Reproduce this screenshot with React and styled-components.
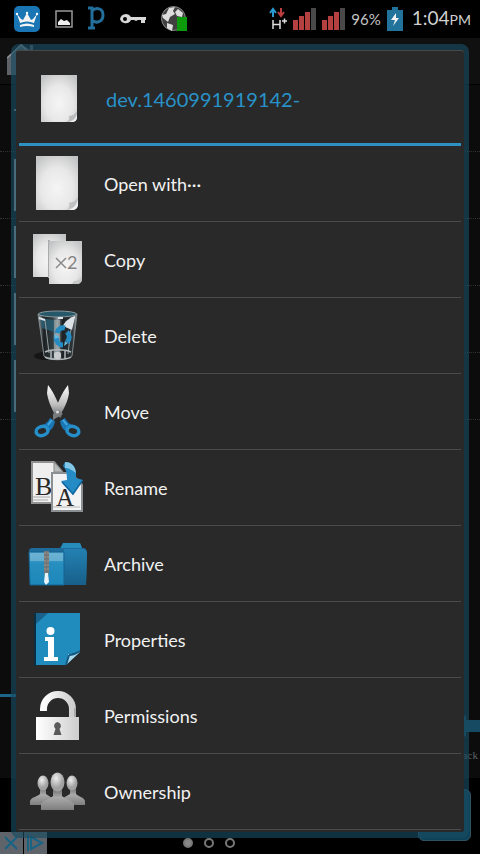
import React from "react";
import styled, { createGlobalStyle } from "styled-components";

const GlobalStyle = createGlobalStyle`
  *, *::before, *::after { box-sizing: border-box; }
  html, body { margin: 0; background: #000; }
  body { font-family: Lato, "Open Sans", sans-serif; color: #f0f0f0; }
  ul, h1 { margin: 0; padding: 0; list-style: none; }
  svg { display: block; flex: none; }
`;

const Screen = styled.div`
  position: relative;
  min-height: 100vh;
  display: flex;
  flex-direction: column;
  overflow: hidden;
`;

const StatusBar = styled.header`
  height: 38px;
  flex: none;
  display: flex;
  justify-content: space-between;
  padding: 0 9px 0 14px;
  background: #000;
`;

const StatusGroup = styled.div`
  display: flex;
  align-items: center;
  gap: ${(p) => p.$gap}px;
`;

const Battery = styled.span`
  font-size: 15px;
  line-height: 20px;
  color: #c4c4c4;
`;

const Clock = styled.time`
  display: flex;
  align-items: baseline;
  margin-left: 3px;
  font-size: 19px;
  line-height: 24px;
  font-weight: 400;
  color: #d0d0d0;
`;

const Meridiem = styled.span`
  font-size: 14px;
`;

const Browser = styled.div`
  flex: none;
  background: #0c0c0c;
`;

const PathBar = styled.div`
  height: 47px;
  padding: 6px 7px 0;
  background: #101010;
  border-bottom: 1px solid #000;
`;

const FileRow = styled.div`
  height: 67px;
  padding: 7px 0 0 14px;
  border-bottom: 1px dotted #333;
`;

const FileThumb = styled.div`
  width: 44px;
  height: 52px;
  background: #a3a8ad;
`;

const ParentMark = styled.div`
  width: 8px;
  height: 2px;
  margin-top: 17px;
  background: #8b979e;
`;

const FilePane = styled.div`
  height: 609px;
`;

const TabMarker = styled.div`
  width: 50%;
  height: 3px;
  background: #1d6489;
`;

const Toolbar = styled.div`
  height: 81px;
  display: flex;
  flex-direction: column;
  align-items: flex-end;
  justify-content: flex-end;
  padding-bottom: 16px;
`;

const BackLabel = styled.span`
  margin: 10px 2px 0 0;
  font-family: "Liberation Serif", serif;
  font-size: 11px;
  line-height: 14px;
  color: #5d6266;
`;

const BottomBar = styled.footer`
  flex: 1;
  display: grid;
  grid-template-columns: 1fr auto 1fr;
  align-items: end;
`;

const AdMarks = styled.div`
  display: flex;
  gap: 1px;
`;

const Dots = styled.div`
  display: flex;
  gap: 11px;
  padding: 0 62px 6px 0;
  margin-left: 0;
`;

const DotsArea = styled.div`
  display: flex;
  justify-content: center;
`;

const Dot = styled.span`
  width: 10px;
  height: 10px;
  border-radius: 50%;
  border: 2px solid #777;
  background: ${(p) => (p.$active ? "#888" : "transparent")};
`;

const Corner = styled.div`
  justify-self: end;
  width: 53px;
  height: 52px;
  margin: 0 9px 13px 0;
  border: 1px solid #31535f;
  border-radius: 6px;
  background: #0e425a;
`;

const Dialog = styled.section`
  position: absolute;
  top: 44px;
  left: 11px;
  right: 11px;
  padding: 0 3px 2px;
  border: 5px solid rgba(25, 76, 97, 0.65);
  border-top-width: 6px;
  border-bottom-width: 6px;
  border-radius: 8px;
  background: #292929;
  background-clip: padding-box;
  box-shadow: inset 0 1px #484848;
`;

const DialogHeader = styled.div`
  height: 96px;
  display: flex;
  align-items: center;
  gap: 29px;
  padding: 5px 0 0 22px;
  border-bottom: 3px solid #2d91c2;
`;

const Title = styled.h1`
  font-size: 20px;
  line-height: 28px;
  font-weight: 400;
  color: #2892c8;
`;

const Action = styled.button`
  width: 100%;
  height: 76px;
  display: flex;
  align-items: center;
  gap: 16px;
  padding: 0 0 0 9px;
  border: 0;
  border-bottom: 1px solid #4a4a4a;
  background: transparent;
  font: 400 18px/26px Lato, "Open Sans", sans-serif;
  color: #f2f2f2;
  text-align: left;
`;

const PaperGradient = ({ id }) => (
  <radialGradient id={id} cx="50%" cy="60%" r="70%">
    <stop offset="0" stopColor="#f5f5f5" />
    <stop offset="0.55" stopColor="#e8e8e8" />
    <stop offset="1" stopColor="#c3c4c5" />
  </radialGradient>
);

const Paper = () => (
  <svg width="60" height="60" viewBox="0 0 60 60" aria-hidden="true">
    <defs><PaperGradient id="paper" /></defs>
    <path d="M8 2h42v46c0 5-3 8-8 8H8z" fill="url(#paper)" />
    <path d="M50 43c-2 4-5 5-9 6 1 3 0 6-3 7h5c5 0 7-3 7-8z" fill="#bfc1c3" />
    <path d="M39 56c6-1 10-5 11-11v5c0 4-2 6-6 6z" fill="#f0f0f0" />
  </svg>
);

const HeaderPaper = () => (
  <svg width="36" height="48" viewBox="0 0 36 48" aria-hidden="true">
    <defs><PaperGradient id="paper-head" /></defs>
    <path d="M0 0h36v40c0 5-2 7-7 7H0z" fill="url(#paper-head)" />
    <path d="M36 36c-2 3-5 5-8 5 1 3 0 5-3 6h4c5 0 7-2 7-7z" fill="#b9bbbd" />
    <path d="M27 47c5-1 8-4 9-8v3c0 4-2 5-5 5z" fill="#ededed" />
  </svg>
);

const CopyIcon = () => (
  <svg width="60" height="60" viewBox="0 0 60 60" aria-hidden="true">
    <defs><PaperGradient id="copy" /></defs>
    <path d="M5 4h33v43H5z" fill="url(#copy)" />
    <path d="M20 10h2v38h-2z" fill="#aaa" />
    <path d="M21 11h33v37c0 4-2 6-6 6H21z" fill="url(#copy)" />
    <path d="M54 46c-2 4-5 5-8 5l-2 3h4c4 0 6-2 6-6z" fill="#c5c7c8" />
    <path d="m28 28 10 10m0-10L28 38" stroke="#8b8b8b" strokeWidth="1.5" />
    <text x="39" y="39" fontFamily="Lato" fontSize="18" fill="#858585">2</text>
  </svg>
);

const TrashIcon = () => (
  <svg width="60" height="60" viewBox="0 0 60 60" aria-hidden="true">
    <defs>
      <linearGradient id="glass" x2="1"><stop stopColor="#98a3a8" /><stop offset=".15" stopColor="#1b2022" /><stop offset=".38" stopColor="#333d41" /><stop offset=".5" stopColor="#8d979b" /><stop offset=".62" stopColor="#1d2224" /><stop offset=".88" stopColor="#2c3337" /><stop offset="1" stopColor="#a4aaac" /></linearGradient>
    </defs>
    <ellipse cx="18" cy="50" rx="12" ry="4" fill="#151515" />
    <path d="m10 8 6 42c2 5 25 5 28 0l5-42z" fill="url(#glass)" stroke="#7f898d" />
    <path d="m12 12 14 2v12l-12-4z" fill="#296075" opacity=".8" />
    <path d="m47 11-3 13-9-4c2-5 6-8 12-9z" fill="#dce2e5" />
    <path d="M26 14h6v36h-6z" fill="#a6afb3" opacity=".6" />
    <path d="M17 14l4 33m22-24-3 25" stroke="#939b9e" />
    <path d="M17 46c6-3 20-3 26 0M17 51c5 3 22 3 26 0M23 45v8m14-8v8" fill="none" stroke="#b2b8ba" strokeWidth="1.5" />
    <rect x="26" y="46" width="7" height="7" rx="2" fill="#c8cccd" />
    <ellipse cx="29.500" cy="8" rx="19" ry="3" fill="#26586a" stroke="#88979d" />
    <path d="M11 12l6 2m13-2h5m7 1 5-2" stroke="#dce2e5" strokeWidth="2" />
    <path d="M37 22c-4-1-7 1-8 5M28 31c0 5 3 8 7 8m4-3c3-3 3-7 0-10" fill="none" stroke="#248bc3" strokeWidth="5" />
    <path d="m26 28 6 3-5 2zm11 7 3 2-4 3z" fill="#65b9df" />
  </svg>
);

const ScissorsIcon = () => (
  <svg width="60" height="60" viewBox="0 0 60 60" aria-hidden="true">
    <defs><linearGradient id="blade" x2="0" y2="1"><stop stopColor="#fff" /><stop offset=".6" stopColor="#bdbdbd" /><stop offset="1" stopColor="#5e6265" /></linearGradient></defs>
    <path d="m20 3-1 8c1 8 5 16 8 22l6 3 1-5c-3-8-7-19-14-28z" fill="url(#blade)" />
    <path d="m40 3 1 8c-1 8-5 16-9 22l-5 3-1-5c3-8 7-19 14-28z" fill="url(#blade)" />
    <path d="m25 32 5-4 5 4-5 3-5 3z" fill="#777b7e" />
    <path d="m22 36 5 3c-1 6-3 9-8 11l-8-6c6-1 9-4 11-8z" fill="#1b76b5" />
    <path d="m37 36-5 3c1 6 3 9 8 11l8-6c-6-1-9-4-11-8z" fill="#1b76b5" />
    <ellipse cx="14" cy="49" rx="6" ry="4.500" transform="rotate(-15 14 49)" fill="#292929" stroke="#258fc9" strokeWidth="3.500" />
    <ellipse cx="45" cy="49" rx="6" ry="4.500" transform="rotate(15 45 49)" fill="#292929" stroke="#258fc9" strokeWidth="3.500" />
    <path d="m24 38-4 5m15-5 4 5" stroke="#42a8dd" strokeWidth="2" />
    <circle cx="29.500" cy="30" r="1.500" fill="#ddd" />
  </svg>
);

const RenameIcon = () => (
  <svg width="60" height="60" viewBox="0 0 60 60" aria-hidden="true">
    <path d="M4 4h22l10 12v29H4z" fill="#efefef" stroke="#909293" strokeWidth="2" />
    <path d="M26 4v10h9z" fill="#b9bcbd" stroke="#888" />
    <path d="M5 39h17M5 42h15" stroke="#aaa" />
    <text x="7" y="37" fontFamily="Liberation Serif" fontSize="26" fill="#282828">B</text>
    <path d="M24 15h19l11 12v26H24z" fill="#f3f3f3" stroke="#8d9092" strokeWidth="2" />
    <path d="M43 15v12h10z" fill="#b6bbbe" />
    <path d="M25 49h27" stroke="#bbb" />
    <text x="28" y="48" fontFamily="Liberation Serif" fontSize="25" fill="#292929">A</text>
    <path d="M37 4c8 0 12 6 11 16l7 2-10 15-12-14 6-1c0-7-1-11-4-14z" fill="#248bc5" />
    <path d="M37 4c7 0 10 4 11 11-4-3-7-5-11-5z" fill="#84c6e6" />
    <path d="m34 24 11 12 9-13" fill="none" stroke="#1066a0" strokeWidth="1.500" />
  </svg>
);

const ArchiveIcon = () => (
  <svg width="60" height="60" viewBox="0 0 60 60" aria-hidden="true">
    <defs>
      <linearGradient id="folder" x2="0" y2="1"><stop stopColor="#51a8d6" /><stop offset=".35" stopColor="#278fbf" /><stop offset="1" stopColor="#1c87ba" /></linearGradient>
      <linearGradient id="folder-back" x2="0" y2="1"><stop stopColor="#2381b1" /><stop offset="1" stopColor="#185f8b" /></linearGradient>
    </defs>
    <path d="M1 18c0-3 1-4 4-4h27l3-5h17l2 5c4 0 5 2 5 5l-1 32H2z" fill="#1e6c9b" />
    <path d="M33 14l2-5h17l2 5z" fill="#278cb9" />
    <path d="M36 15h18c3 0 5 2 5 5l-1 31H36z" fill="url(#folder-back)" />
    <path d="M1 18h35v33H2z" fill="url(#folder)" stroke="#166392" />
    <path d="M2 19h33v8H2z" fill="#75b5d2" opacity=".75" />
    <path d="M16 17h5v23h-5z" fill="#74777a" />
    <path d="M16 19h5m-5 4h5m-5 4h5m-5 4h5m-5 4h5" stroke="#a59983" strokeDasharray="2 1" />
    <path d="M17 39h3l1 9-3 3-2-3z" fill="#e8f2f7" />
  </svg>
);

const PropertiesIcon = () => (
  <svg width="60" height="60" viewBox="0 0 60 60" aria-hidden="true">
    <path d="M6 3h3v53H6z" fill="#0b2f42" />
    <path d="M8 3h44v39L38 55H8z" fill="#208bbd" />
    <path d="M8 3h12L8 14z" fill="#19608a" />
    <path d="M52 42 38 55c2-3 2-7 2-11 5 1 9-1 12-2z" fill="#aad8ed" />
    <path d="M41 45c5 0 8-2 11-4M38 55l3-10" stroke="#155a82" strokeWidth="2" />
    <circle cx="22.500" cy="21" r="4" fill="#fff" />
    <path d="M17 27h9v20h4v4H16v-4h4V31h-3z" fill="#fff" />
  </svg>
);

const PermissionsIcon = () => (
  <svg width="60" height="60" viewBox="0 0 60 60" aria-hidden="true">
    <defs><linearGradient id="metal" x2="1"><stop stopColor="#fff" /><stop offset="1" stopColor="#cecece" /></linearGradient></defs>
    <path d="M15.500 25v-2a14.500 14.500 0 0 1 29 0v10" fill="none" stroke="url(#metal)" strokeWidth="7" />
    <path d="M47 22v9" stroke="#aaa" strokeWidth="2" />
    <path d="M8 31h43v23H8z" fill="url(#metal)" />
    <path d="M29.500 36a4 4 0 0 0-2 7l-2 6h8l-2-6a4 4 0 0 0-2-7z" fill="#595959" />
  </svg>
);

const OwnershipIcon = () => (
  <svg width="60" height="60" viewBox="0 0 60 60" aria-hidden="true">
    <defs>
      <radialGradient id="head" cx="40%" cy="30%"><stop stopColor="#eee" /><stop offset="1" stopColor="#a2a2a2" /></radialGradient>
      <linearGradient id="body" x2="0" y2="1"><stop stopColor="#6e6e6e" /><stop offset=".4" stopColor="#aaa" /><stop offset="1" stopColor="#7e7e7e" /></linearGradient>
    </defs>
    <path d="M2 43v-4c1-4 7-4 10-7v-6h6v6l6 4v7z" fill="url(#body)" />
    <path d="M35 43v-7l7-4v-6h6v6c3 3 8 3 9 7v4z" fill="url(#body)" />
    <path d="M13 48v-6c2-4 8-4 12-8v-7h9v7c4 4 10 4 12 8v6z" fill="url(#body)" />
    <ellipse cx="15" cy="21" rx="5.500" ry="7.500" fill="url(#head)" />
    <ellipse cx="44" cy="21" rx="5.500" ry="7.500" fill="url(#head)" />
    <ellipse cx="29.500" cy="20" rx="7" ry="9.500" fill="url(#head)" />
  </svg>
);

const CrownIcon = () => (
  <svg width="26" height="26" viewBox="0 0 26 26" aria-hidden="true">
    <rect width="26" height="26" rx="5" fill="#1975b4" />
    <path d="m3 8 3 9q7-3 14 0l3-9-4 5-2 1-4-7-4 7-2-1z" fill="#f2f2f2" />
    <path d="M6 19q7-3 14 0v2q-7-2-14 0z" fill="#f2f2f2" />
    <circle cx="3" cy="8" r="1.200" fill="#fff" /><circle cx="13" cy="7" r="1.200" fill="#fff" /><circle cx="23" cy="8" r="1.200" fill="#fff" />
  </svg>
);

const PictureIcon = () => (
  <svg width="18" height="18" viewBox="0 0 18 18" aria-hidden="true">
    <path d="M1 1h16v16H1z" fill="none" stroke="#999" strokeWidth="1.5" />
    <path d="M3 15v-3l3-3 3 2 3-1 3 3v2z" fill="#eee" />
  </svg>
);

const PIcon = () => (
  <svg width="17" height="26" viewBox="0 0 17 26" aria-hidden="true">
    <path d="M0 2h4v20M0 22h7M4 5c4-4 11-3 11 4s-7 9-11 5" fill="none" stroke="#226f9c" strokeWidth="3" />
  </svg>
);

const KeyIcon = () => (
  <svg width="26" height="14" viewBox="0 0 26 14" aria-hidden="true">
    <path fillRule="evenodd" d="M0 7a6 6 0 0 1 11-2h15v3h-1v3h-4V8h-3l-2 1-2-1h-3A6 6 0 0 1 0 7zm3 0a2 2 0 1 0 4 0 2 2 0 0 0-4 0z" fill="#d8d8d8" />
  </svg>
);

const GlobeIcon = () => (
  <svg width="27" height="26" viewBox="0 0 27 26" aria-hidden="true">
    <circle cx="12.500" cy="12.500" r="12" fill="#404040" stroke="#888" />
    <path d="m8 2 6-1-2 4 2 3-5 3-2 5-5-4-1-3 4-1zM17 3l5 4-1 4-5-1-2-4zM6 17l6 2-1 6-5-3z" fill="#ddd" />
    <path d="M16 11h10v14H16z" fill="#0c990c" />
  </svg>
);

const DataIcon = () => (
  <svg width="20" height="24" viewBox="0 0 20 24" aria-hidden="true">
    <path d="M6 10V3M3 6l3-4 3 4" fill="none" stroke="#299bd0" strokeWidth="2" />
    <path d="M14 1v7m-3-3 3 4 3-4" fill="none" stroke="#bd3e40" strokeWidth="2" />
    <path d="M6 13v9m7-9v9M6 17.500h7M15 14h5m-2.500-2.500v5" fill="none" stroke="#ddd" strokeWidth="1.500" />
  </svg>
);

const SignalIcon = () => (
  <svg width="23" height="22" viewBox="0 0 23 22" aria-hidden="true">
    <path d="M0 12h5v10H0zM6 8h5v14H6zM12 4h5v18h-5z" fill="#b54040" />
    <path d="M18 0h5v22h-5z" fill="#494949" />
  </svg>
);

const BatteryIcon = () => (
  <svg width="16" height="24" viewBox="0 0 16 24" aria-hidden="true">
    <path d="M5 0h6v3h5v21H0V3h5z" fill="#21739b" />
    <path d="m9 6-5 7h4l-2 6 6-8H9z" fill="#f2f2f2" />
  </svg>
);

const HomeIcon = () => (
  <svg width="36" height="31" viewBox="0 0 36 31" aria-hidden="true">
    <path d="M0 14 14 0l9 6V1h3v10l8 8v12H0z" fill="#5c6268" />
    <path d="m0 14 14-13 11 10" fill="none" stroke="#8f979d" strokeWidth="1.500" />
  </svg>
);

const BackArrow = () => (
  <svg width="22" height="24" viewBox="0 0 22 24" aria-hidden="true">
    <path d="M0 12 8 0v6h14v12H8v6z" fill="#154a62" />
  </svg>
);

const AdIcon = ({ play }) => (
  <svg width="23" height="22" viewBox="0 0 23 22" aria-hidden="true">
    <path d="M0 0h23v22H0z" fill="#5f646b" />
    <path d={play ? "M4 3v16M7 5l11 6-11 6z" : "m5 5 12 12M17 5 5 17"} fill="none" stroke="#176485" strokeWidth="2" />
  </svg>
);

const actions = [
  ["Open with···", Paper],
  ["Copy", CopyIcon],
  ["Delete", TrashIcon],
  ["Move", ScissorsIcon],
  ["Rename", RenameIcon],
  ["Archive", ArchiveIcon],
  ["Properties", PropertiesIcon],
  ["Permissions", PermissionsIcon],
  ["Ownership", OwnershipIcon],
];

export default function App() {
  return (
    <Screen>
      <GlobalStyle />
      <StatusBar>
        <StatusGroup $gap={15}>
          <CrownIcon /><PictureIcon /><PIcon /><KeyIcon /><GlobeIcon />
        </StatusGroup>
        <StatusGroup $gap={6}>
          <DataIcon /><SignalIcon /><SignalIcon />
          <Battery>96%</Battery>
          <BatteryIcon />
          <Clock>1:04<Meridiem>PM</Meridiem></Clock>
        </StatusGroup>
      </StatusBar>
      <Browser>
        <PathBar><HomeIcon /></PathBar>
        <FilePane>
          <FileRow><ParentMark /></FileRow>
          {[1, 2, 3, 4].map((n) => <FileRow key={n}><FileThumb /></FileRow>)}
        </FilePane>
        <TabMarker />
        <Toolbar>
          <BackArrow />
          <BackLabel>Back</BackLabel>
        </Toolbar>
      </Browser>
      <BottomBar>
        <AdMarks><AdIcon /><AdIcon play /></AdMarks>
        <DotsArea><Dots><Dot $active /><Dot /><Dot /></Dots></DotsArea>
        <Corner />
      </BottomBar>
      <Dialog role="dialog" aria-labelledby="file-name">
        <DialogHeader>
          <HeaderPaper />
          <Title id="file-name">dev.1460991919142-</Title>
        </DialogHeader>
        <ul>
          {actions.map(([label, Icon]) => (
            <li key={label}><Action type="button"><Icon />{label}</Action></li>
          ))}
        </ul>
      </Dialog>
    </Screen>
  );
}
